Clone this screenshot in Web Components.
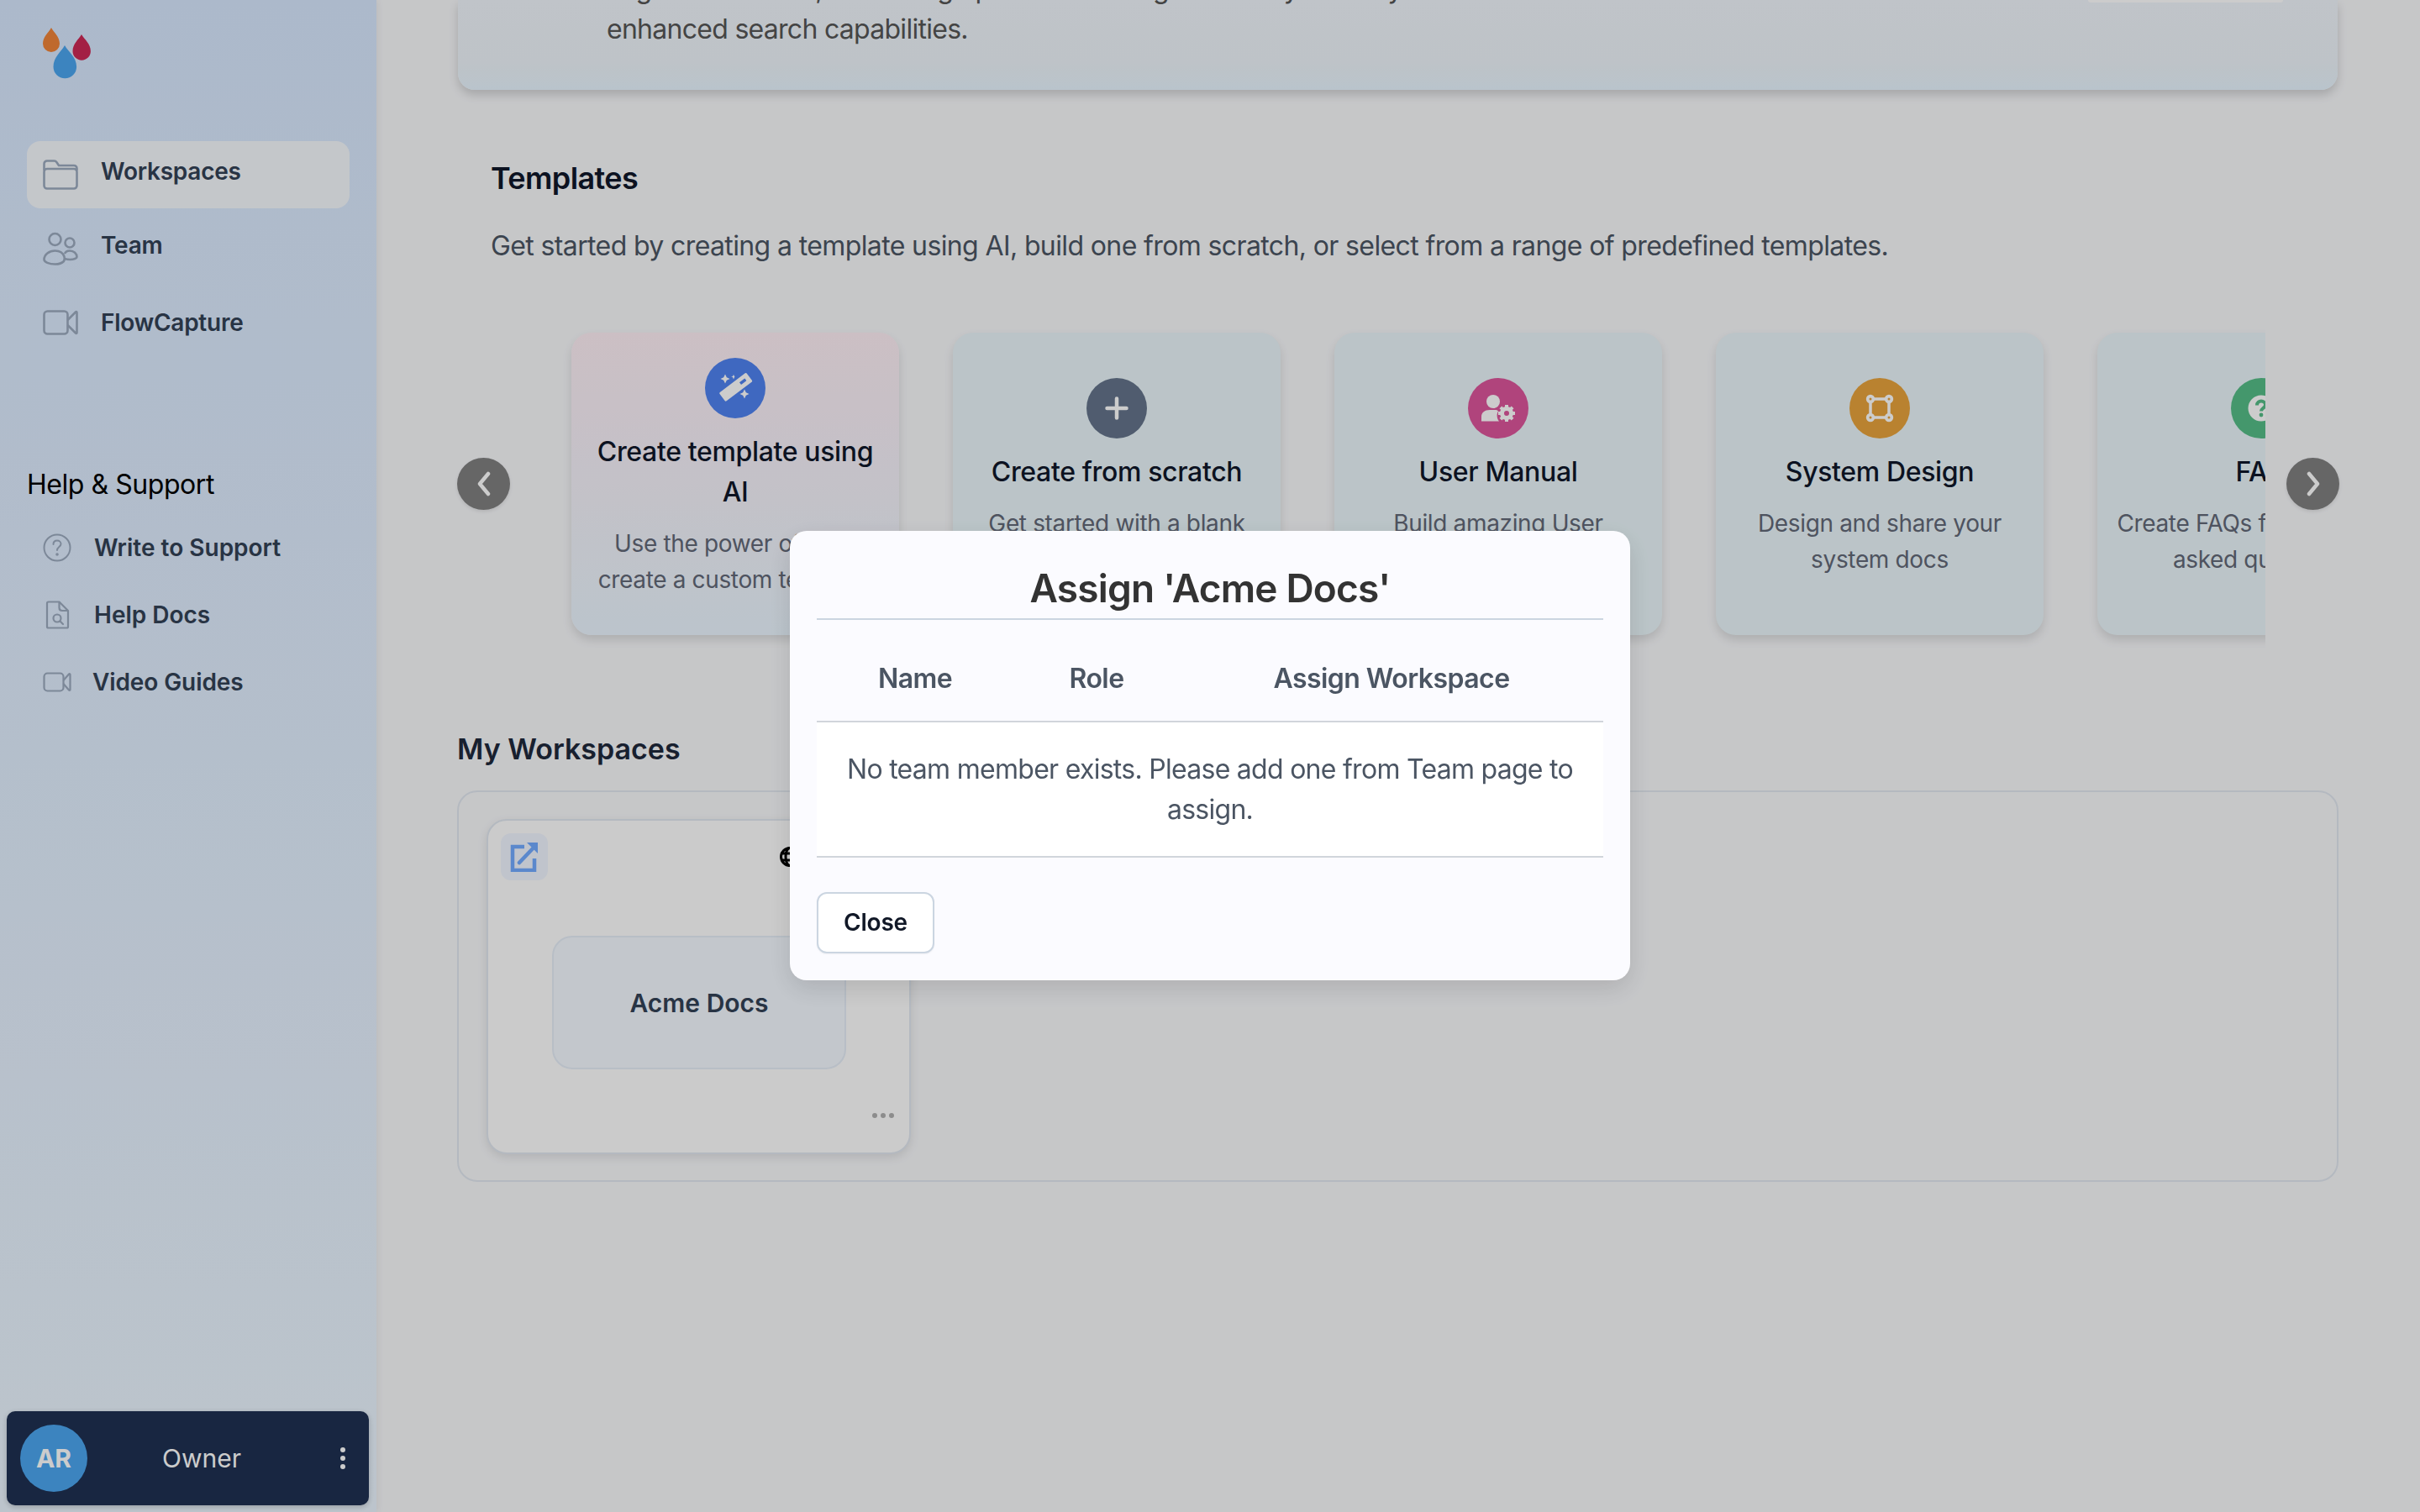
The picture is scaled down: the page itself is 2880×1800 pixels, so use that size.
<!DOCTYPE html>
<html lang="en">
<head>
<meta charset="utf-8">
<title>Workspaces</title>
<style>
  html, body { margin: 0; height: 100%; overflow: hidden; }
  body { font-family: Inter, "Noto Sans", sans-serif; background: #f8f9fb; }
  svg { display: block; }
</style>
</head>
<body>
<app-shell>
  <side-bar slot="side">
    <nav-item active lift label="Workspaces">
      <svg width="42" height="36" viewBox="0 0 42 36" fill="none" stroke="#9caabf" stroke-width="2.6" stroke-linejoin="round" stroke-linecap="round"><path d="M1.5 12V5a3.5 3.5 0 0 1 3.5-3.5h8.5c1.5 0 2.3.6 3 1.7L19 7h18a3.5 3.5 0 0 1 3.5 3.5V12"/><path d="M1.5 31V14.500a3.500 3.500 0 0 1 3.500-3.500h32a3.500 3.500 0 0 1 3.500 3.500V31a3.500 3.500 0 0 1-3.500 3.500H5A3.500 3.500 0 0 1 1.500 31z"/></svg>
    </nav-item>
    <nav-item lift label="Team">
      <svg width="42" height="40" viewBox="0 0 42 40" fill="none" stroke="#9caabf" stroke-width="2.6"><circle cx="14.500" cy="9" r="7"/><circle cx="32" cy="13" r="5.500"/><path d="M1.500 33c0-6 6-10.500 13-10.500 5.500 0 9.500 2.500 11 7 .6 2.500.5 4-.5 5.500-2.500 2.500-6.500 3.500-10.500 3.500-7 0-13-2.500-13-5.500z"/><path d="M26 26c1-2.500 3.500-3.500 6-3.500 5 0 8.500 3.500 8.500 7.500 0 1.500-3.500 3-8 3-2 0-4.500-.3-6.500-1"/></svg>
    </nav-item>
    <nav-item label="FlowCapture">
      <svg width="42" height="30" viewBox="0 0 42 30" fill="none" stroke="#9caabf" stroke-width="2.600" stroke-linejoin="round"><rect x="1.500" y="1.500" width="28" height="27" rx="4"/><path d="M29.500 12 39 2.500c.8-.8 1.500-.4 1.500.5v24c0 .9-.7 1.300-1.500.5L29.500 18"/></svg>
    </nav-item>
    <side-heading>Help &amp; Support</side-heading>
    <help-item label="Write to Support">
      <svg width="34" height="34" viewBox="0 0 34 34" fill="none" stroke="#9caabf" stroke-width="2"><circle cx="17" cy="17" r="15.500"/><path d="M12.500 13c0-3 2-4.500 4.500-4.500s4.500 1.700 4.500 4c0 3.500-4.500 3.500-4.500 7.500" stroke-linecap="round"/><circle cx="17" cy="25" r=".8"/></svg>
    </help-item>
    <help-item label="Help Docs">
      <svg width="34" height="34" viewBox="0 0 34 34" fill="none" stroke="#9caabf" stroke-width="2.200" stroke-linejoin="round"><path d="M5 3.200c0-1 .7-1.700 1.700-1.700h12.800L30 12v19c0 .9-.7 1.500-1.500 1.500h-22c-1 0-1.500-.7-1.500-1.500z"/><path d="M19.500 1.500v7c0 2 1.300 3.500 3.500 3.500h7"/><circle cx="17" cy="21" r="4.500"/><path d="m20.500 24.500 3.500 3.500" stroke-linecap="round"/></svg>
    </help-item>
    <help-item tight label="Video Guides">
      <svg width="34" height="24" viewBox="0 0 34 24" fill="none" stroke="#9caabf" stroke-width="2.200" stroke-linejoin="round"><rect x="1.500" y="1.500" width="23" height="21" rx="4"/><path d="M24.500 10 31 2.500c.7-.7 1.500-.3 1.500.5v18c0 .8-.8 1.200-1.500.5L24.500 14"/></svg>
    </help-item>
    <user-card></user-card>
  </side-bar>

  <top-notice>
    <span slot="lead">Organize content, then bring up the latest blog and easily add any</span>
    <span>enhanced search capabilities.</span>
  </top-notice>

  <templates-section>
    <template-card pink title-text="Create template using AI" desc="Use the power of AI to create a custom template" color="#4f83f1">
      <svg width="72" height="72" viewBox="-36 -36 72 72" fill="#fff"><g transform="rotate(-37)"><path d="M-20-5.500a1.500 1.500 0 0 1 1.500-1.500H19a1.500 1.500 0 0 1 1.500 1.500v10A1.500 1.500 0 0 1 19 6H-18.500a1.500 1.500 0 0 1-1.500-1.500z" transform="translate(1 0)"/><rect x="8" y="-2.500" width="8" height="3.500" rx=".5" fill="#4f83f1"/></g><path d="M-12-16.500-10.200-12.800-6.500-11-10.200-9.200-12-5.500-13.800-9.200-17.500-11-13.800-12.800zM-2-16-1-14-.5-13.500-1-13-2-10.500-3-13-5-13.500-3-14zM11 1.500 12.800 5.300 16.500 7 12.800 8.800 11 12.500 9.200 8.800 5.500 7 9.200 5.300z"/></svg>
    </template-card>
    <template-card title-text="Create from scratch" desc="Get started with a blank canvas" color="#64748b" lower>
      <svg width="72" height="72" viewBox="-36 -36 72 72" fill="none" stroke="#fff" stroke-width="4.500" stroke-linecap="round"><path d="M0-11.500v23M-11.500 0h23"/></svg>
    </template-card>
    <template-card title-text="User Manual" desc="Build amazing User Manuals" color="#dc569b" lower>
      <svg width="72" height="72" viewBox="-36 -36 72 72" fill="#fff"><circle cx="-6" cy="-8" r="8"/><path d="M-20 15.500V10c0-5 4-8 10-8h6c2 0 3 .4 4 1.500-2 3.500-2 8 1 12z"/><circle cx="10" cy="6" r="5.500" fill="none" stroke="#fff" stroke-width="5"/><path stroke="#fff" stroke-width="4" d="M10-4v3.500M10 12.500V16M0 6h3.500M16.500 6H20M2.900-1.100l2.500 2.500M14.600 10.600l2.500 2.500M2.900 13.100l2.500-2.500M14.600 1.400l2.500-2.500"/></svg>
    </template-card>
    <template-card title-text="System Design" desc="Design and share your system docs" color="#e8a33d" lower>
      <svg width="72" height="72" viewBox="-36 -36 72 72" fill="none" stroke="#fff" stroke-width="3.500"><rect x="-11" y="-11" width="22" height="22"/><g fill="#fff" stroke="none"><circle cx="-11" cy="-11" r="5.200"/><circle cx="11" cy="-11" r="5.200"/><circle cx="-11" cy="11" r="5.200"/><circle cx="11" cy="11" r="5.200"/></g><g fill="#e8a33d" stroke="none"><circle cx="-11" cy="-11" r="1.500"/><circle cx="11" cy="-11" r="1.500"/><circle cx="-11" cy="11" r="1.500"/><circle cx="11" cy="11" r="1.500"/></g></svg>
    </template-card>
    <template-card title-text="FAQ" desc="Create FAQs for frequently asked questions" color="#56bd87" lower>
      <svg width="72" height="72" viewBox="-36 -36 72 72"><circle r="15.500" fill="#fff"/><path d="M-5-3.500C-5-7-2.500-8.500 0-8.500S5-6.800 5-4C5-.5 0 0 0 3.500" fill="none" stroke="#56bd87" stroke-width="4"/><circle cy="8" r="2.400" fill="#56bd87"/></svg>
    </template-card>
  </templates-section>

  <workspaces-section>
    <workspace-card name="Acme Docs"></workspace-card>
  </workspaces-section>
</app-shell>

<assign-modal doc="Acme Docs"></assign-modal>

<script>
class AppShell extends HTMLElement {
  constructor() {
    super();
    this.attachShadow({ mode: "open" }).innerHTML = `
<style>
:host { display: flex; height: 1800px; width: 2880px; overflow: hidden; }
main { flex: 1; min-width: 0; padding: 0 98px 0 97px; }
</style>
<slot name="side"></slot>
<main><slot></slot></main>`;
  }
}

class SideBar extends HTMLElement {
  constructor() {
    super();
    this.attachShadow({ mode: "open" }).innerHTML = `
<style>
:host {
  display: flex; flex-direction: column; flex: none; width: 448px; height: 1800px; box-sizing: border-box;
  padding: 32px 32px 8px; gap: 8px; position: relative;
  background: linear-gradient(180deg, #d8e8fe 0%, #ecf6ff 100%);
  box-shadow: 2px 0 8px rgba(0,0,0,.06);
}
.logo { height: 128px; margin-left: 18px; }
</style>
<div class="logo">
  <svg width="60" height="64" viewBox="0 0 60 64">
    <path fill="#ef8439" d="M11 1C7.500 7 1 12 1 20a10 10 0 0 0 20 0C21 12 14.500 7 11 1z"/>
    <path fill="#cc2855" d="M47 9c-3.500 6-10.500 11-10.500 20a10.700 10.700 0 0 0 21.400 0C57.900 20 50.500 15 47 9z"/>
    <path fill="#4ca6ef" d="M27 22C22.500 30 13.500 36 13.500 47.500a13.800 13.800 0 0 0 27.600 0C41.100 36 31.500 30 27 22z"/>
  </svg>
</div>
<slot></slot>`;
  }
}

class NavItem extends HTMLElement {
  constructor() {
    super();
    this.attachShadow({ mode: "open" }).innerHTML = `
<style>
:host { display: flex; align-items: center; height: 80px; padding-left: 19px; border-radius: 16px; gap: 27px;
  font: 600 28px/40px Inter, sans-serif; letter-spacing: -.25px; color: #334155; }
:host([active]) { background: #f6f9fd; }
:host([lift]) .label { padding-bottom: 8px; }
.icon { width: 42px; display: flex; justify-content: center; }
</style>
<span class="icon"><slot></slot></span>
<span class="label"></span>`;
    this.shadowRoot.querySelector(".label").textContent = this.getAttribute("label");
  }
}

class SideHeading extends HTMLElement {
  constructor() {
    super();
    this.attachShadow({ mode: "open" }).innerHTML = `
<style>
:host { display: block; margin: 121px 0 7px; height: 48px; font: 400 32px/48px Inter, sans-serif; letter-spacing: -.45px; color: #000; }
</style>
<slot></slot>`;
  }
}

class HelpItem extends HTMLElement {
  constructor() {
    super();
    this.attachShadow({ mode: "open" }).innerHTML = `
<style>
:host { display: flex; align-items: center; height: 72px; padding-left: 19px; gap: 27px;
  font: 600 28px/40px Inter, sans-serif; color: #334155; }
:host([tight]) { gap: 25px; letter-spacing: -.1px; }
.icon { width: 34px; display: flex; justify-content: center; }
</style>
<span class="icon"><slot></slot></span>
<span class="label"></span>`;
    this.shadowRoot.querySelector(".label").textContent = this.getAttribute("label");
  }
}

class UserCard extends HTMLElement {
  constructor() {
    super();
    this.attachShadow({ mode: "open" }).innerHTML = `
<style>
:host { display: flex; align-items: center; margin: auto -23px 0 -24px; height: 112px; box-sizing: border-box;
  padding: 0 16px; border-radius: 10px; background: #1e3052; box-shadow: 0 2px 6px rgba(0,0,0,.2);
  color: #fff; font-family: Inter, sans-serif; }
.avatar { width: 80px; height: 80px; border-radius: 50%; background: #4ca6ef; display: flex; align-items: center;
  justify-content: center; font-weight: 700; font-size: 30px; }
.role { flex: 1; text-align: center; font-size: 30px; padding-right: 29px; }
.dots { display: flex; flex-direction: column; gap: 4px; margin-right: 12px; }
.dots i { width: 6px; height: 6px; border-radius: 50%; background: #fff; }
</style>
<div class="avatar">AR</div>
<div class="role">Owner</div>
<div class="dots"><i></i><i></i><i></i></div>`;
  }
}

class TopNotice extends HTMLElement {
  constructor() {
    super();
    this.attachShadow({ mode: "open" }).innerHTML = `
<style>
:host { display: flex; justify-content: space-between; height: 107px; box-sizing: border-box; padding: 0 65px 48px 177px;
  border-radius: 0 0 20px 20px; background: linear-gradient(180deg, #f0f5fc 0%, #eef4fa 70%, #e8f5ff 100%);
  box-shadow: 0 6px 12px rgba(0,0,0,.16); }
.text { align-self: flex-end; font: 400 32px/48px Inter, sans-serif; letter-spacing: -.72px; color: #565656; white-space: nowrap; }
.lead { display: block; }
.btn { width: 232px; height: 3px; background: #fff; border-radius: 0 0 8px 8px; }
</style>
<div class="text"><span class="lead"><slot name="lead"></slot></span><slot></slot></div>
<div class="btn"></div>`;
  }
}

class TemplatesSection extends HTMLElement {
  constructor() {
    super();
    this.attachShadow({ mode: "open" }).innerHTML = `
<style>
:host { display: block; font-family: Inter, sans-serif; }
h2 { margin: 81px 0 0 39px; font: 600 36px/48px Inter, sans-serif; letter-spacing: -.6px; color: #0f172a; }
p { margin: 33px 0 0 39px; font: 400 32px/48px Inter, sans-serif; letter-spacing: -.62px; color: #4b5563; }
.row { display: flex; align-items: center; margin: 55px -2px 0 -1px; }
.track { flex: 1; min-width: 0; display: flex; gap: 64px; overflow: hidden; padding: 24px 0 24px 40px; margin: 0 25px 0 33px; }
.arrow { flex: none; width: 63px; height: 62px; border-radius: 50%; background: #808080; display: flex; align-items: center; justify-content: center;
  box-shadow: 0 2px 4px rgba(0,0,0,.1); }
</style>
<h2>Templates</h2>
<p>Get started by creating a template using AI, build one from scratch, or select from a range of predefined templates.</p>
<div class="row">
  <div class="arrow"><svg width="18" height="30" viewBox="0 0 18 30" fill="none" stroke="#fff" stroke-width="4.500" stroke-linecap="round" stroke-linejoin="round"><path d="M14 3 4 15l10 12"/></svg></div>
  <div class="track"><slot></slot></div>
  <div class="arrow"><svg width="18" height="30" viewBox="0 0 18 30" fill="none" stroke="#fff" stroke-width="4.500" stroke-linecap="round" stroke-linejoin="round"><path d="m4 3 10 12L4 27"/></svg></div>
</div>`;
  }
}

class TemplateCard extends HTMLElement {
  constructor() {
    super();
    this.attachShadow({ mode: "open" }).innerHTML = `
<style>
:host { display: flex; flex: none; flex-direction: column; align-items: center; width: 390px; height: 360px; box-sizing: border-box;
  padding: 30px 20px 0; border-radius: 24px; text-align: center; background: #eaf6fa;
  box-shadow: 0 6px 12px rgba(0,0,0,.12); }
:host([lower]) { padding-top: 54px; }
:host([pink]) { background: linear-gradient(180deg, #ffeff6 0%, #ebf6ff 100%); }
.dot { width: 72px; height: 72px; border-radius: 50%; flex: none; }
h3 { margin: 16px 0 0; font: 500 32px/48px Inter, sans-serif; letter-spacing: -.35px; color: #0f172a; }
p { margin: 16px 0 0; font: 400 28px/43px Inter, sans-serif; letter-spacing: -.35px; color: #626877; }
</style>
<div class="dot"><slot></slot></div>
<h3></h3>
<p></p>`;
    this.shadowRoot.querySelector(".dot").style.background = this.getAttribute("color");
    this.shadowRoot.querySelector("h3").textContent = this.getAttribute("title-text");
    this.shadowRoot.querySelector("p").textContent = this.getAttribute("desc");
  }
}

class WorkspacesSection extends HTMLElement {
  constructor() {
    super();
    this.attachShadow({ mode: "open" }).innerHTML = `
<style>
:host { display: block; }
h2 { margin: 84px 0 21px -1px; font: 600 34px/56px Inter, sans-serif; color: #1e293b; }
.panel { height: 466px; box-sizing: border-box; margin: 0 -1px; padding: 32px 32px 32px 33px; border: 2px solid #e2e8f0; border-radius: 24px; }
</style>
<h2>My Workspaces</h2>
<div class="panel"><slot></slot></div>`;
  }
}

class WorkspaceCard extends HTMLElement {
  constructor() {
    super();
    this.attachShadow({ mode: "open" }).innerHTML = `
<style>
:host { display: block; width: 505px; height: 399px; box-sizing: border-box; padding: 15px 18px 0 15px; border: 2px solid #e2e8f0; border-radius: 24px;
  background: #fefefe; box-shadow: 0 4px 12px rgba(0,0,0,.1); font-family: Inter, sans-serif; }
.top { display: flex; align-items: center; height: 56px; }
.chip { width: 56px; height: 56px; border-radius: 12px; background: #f0f5ff; display: flex; align-items: center; justify-content: center; }
.globe { margin-left: 276px; }
.box { margin: 66px 0 0 61px; width: 350px; height: 159px; box-sizing: border-box; border: 2px solid #e6eef8; border-radius: 24px; background: #f4f9ff;
  display: flex; align-items: center; justify-content: center; font: 600 30px/40px Inter, sans-serif; color: #334155; }
.more { display: flex; justify-content: flex-end; gap: 4px; margin-top: 52px; }
.more i { width: 6px; height: 6px; border-radius: 50%; background: #b0b0b0; }
</style>
<div class="top">
  <div class="chip">
    <svg width="34" height="36" viewBox="0 0 34 36" fill="none" stroke="#72aaff" stroke-width="4.500"><path d="M17 6H3v28h26V20" stroke-linejoin="miter"/><path d="M11 25 30 5" stroke-linecap="round"/><path d="M20 1h13v13z" fill="#72aaff" stroke="none"/></svg>
  </div>
  <svg class="globe" width="24" height="24" viewBox="0 0 24 24" fill="none" stroke="#000" stroke-width="3"><circle cx="12" cy="12" r="10.500"/><ellipse cx="12" cy="12" rx="5" ry="10.500"/><path d="M2 8h20M2 16h20"/></svg>
</div>
<div class="box"></div>
<div class="more"><i></i><i></i><i></i></div>`;
    this.shadowRoot.querySelector(".box").textContent = this.getAttribute("name");
  }
}

class AssignModal extends HTMLElement {
  constructor() {
    super();
    this.attachShadow({ mode: "open" }).innerHTML = `
<style>
:host { position: fixed; inset: 0; display: flex; align-items: center; justify-content: center; background: rgba(0,0,0,.2);
  font-family: Inter, sans-serif; }
.dialog { width: 1000px; height: 535px; margin-bottom: 2px; box-sizing: border-box; padding: 32px; border-radius: 20px; background: #fbfbff;
  box-shadow: 0 10px 30px rgba(0,0,0,.12); }
h2 { margin: 0; height: 72px; font: 600 46px/72px Inter, sans-serif; letter-spacing: -.8px; color: #333; text-align: center; border-bottom: 2px solid #cbd5e1; box-sizing: content-box; }
.head { display: grid; grid-template-columns: 234px 198px 1fr; height: 122px; box-sizing: border-box; padding-top: 20px; align-items: center; text-align: center;
  font: 600 32px/48px Inter, sans-serif; letter-spacing: -.55px; color: #4b5563; border-bottom: 2px solid #d1d5db; }
.empty { padding: 32px 16px 31px; background: #fff; text-align: center; font: 400 32px/48px Inter, sans-serif; letter-spacing: -.72px; color: #4b5563; border-bottom: 2px solid #d1d5db; }
button { display: block; margin-top: 41px; width: 140px; height: 73px; border: 2px solid #cbd5e1; border-radius: 12px; background: #fff;
  box-shadow: 0 1px 2px rgba(0,0,0,.05); font: 600 28px/40px Inter, sans-serif; letter-spacing: -.2px; color: #111827; padding: 0; }
</style>
<div class="dialog">
  <h2></h2>
  <div class="head"><span>Name</span><span>Role</span><span>Assign Workspace</span></div>
  <div class="empty">No team member exists. Please add one from Team page to assign.</div>
  <button>Close</button>
</div>`;
    this.shadowRoot.querySelector("h2").textContent = `Assign '${this.getAttribute("doc")}'`;
  }
}

customElements.define("app-shell", AppShell);
customElements.define("side-bar", SideBar);
customElements.define("nav-item", NavItem);
customElements.define("side-heading", SideHeading);
customElements.define("help-item", HelpItem);
customElements.define("user-card", UserCard);
customElements.define("top-notice", TopNotice);
customElements.define("templates-section", TemplatesSection);
customElements.define("template-card", TemplateCard);
customElements.define("workspaces-section", WorkspacesSection);
customElements.define("workspace-card", WorkspaceCard);
customElements.define("assign-modal", AssignModal);
</script>
</body>
</html>
